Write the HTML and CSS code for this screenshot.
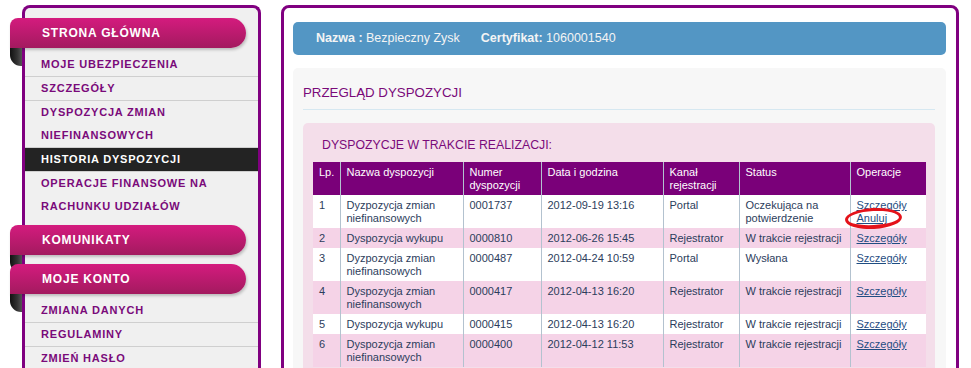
FILE: index.html
```html
<!DOCTYPE html>
<html lang="pl">
<head>
    <meta charset="UTF-8">
    <title>Przegląd dyspozycji</title>
    <link rel="stylesheet" href="styles.css">
</head>
<body>
<div id="container">
  <div class="side_col">
    <div class="sidebar">
      <div class="menu_section">
        <div class="menu_tab">STRONA GŁÓWNA</div>
        <ul class="menu_list">
          <li>MOJE UBEZPIECZENIA</li>
          <li>SZCZEGÓŁY</li>
          <li>DYSPOZYCJA ZMIAN NIEFINANSOWYCH</li>
          <li class="active">HISTORIA DYSPOZYCJI</li>
          <li class="last">OPERACJE FINANSOWE NA RACHUNKU UDZIAŁÓW</li>
        </ul>
      </div>
      <div class="menu_section collapsed">
        <div class="menu_tab">KOMUNIKATY</div>
      </div>
      <div class="menu_section">
        <div class="menu_tab">MOJE KONTO</div>
        <ul class="menu_list">
          <li>ZMIANA DANYCH</li>
          <li>REGULAMINY</li>
          <li>ZMIEŃ HASŁO</li>
        </ul>
      </div>
    </div>
  </div>

  <div class="main">
    <div class="info_bar">
      <span class="info_item"><b>Nazwa :</b> Bezpieczny Zysk</span>
      <span class="info_item"><b>Certyfikat:</b> 1060001540</span>
    </div>
    <div class="content_box">
      <div class="page_title">PRZEGLĄD DYSPOZYCJI</div>
      <div class="pink_box">
        <div class="box_title">DYSPOZYCJE W TRAKCIE REALIZACJI:</div>
        <table class="disp_table">
          <colgroup>
            <col style="width:27px">
            <col style="width:123px">
            <col style="width:78px">
            <col style="width:122px">
            <col style="width:76px">
            <col style="width:111px">
            <col style="width:76px">
          </colgroup>
          <thead>
            <tr>
              <th>Lp.</th>
              <th>Nazwa dyspozycji</th>
              <th>Numer dyspozycji</th>
              <th>Data i godzina</th>
              <th>Kanał rejestracji</th>
              <th>Status</th>
              <th>Operacje</th>
            </tr>
          </thead>
          <tbody>
            <tr>
              <td>1</td>
              <td>Dyzpozycja zmian niefinansowych</td>
              <td>0001737</td>
              <td>2012-09-19 13:16</td>
              <td>Portal</td>
              <td>Oczekująca na potwierdzenie</td>
              <td><a href="#">Szczegóły</a><br><span class="circled"><a href="#">Anuluj</a></span></td>
            </tr>
            <tr class="odd">
              <td>2</td>
              <td>Dyspozycja wykupu</td>
              <td>0000810</td>
              <td>2012-06-26 15:45</td>
              <td>Rejestrator</td>
              <td>W trakcie rejestracji</td>
              <td><a href="#">Szczegóły</a></td>
            </tr>
            <tr>
              <td>3</td>
              <td>Dyzpozycja zmian niefinansowych</td>
              <td>0000487</td>
              <td>2012-04-24 10:59</td>
              <td>Portal</td>
              <td>Wysłana</td>
              <td><a href="#">Szczegóły</a></td>
            </tr>
            <tr class="odd">
              <td>4</td>
              <td>Dyspozycja zmian niefinansowych</td>
              <td>0000417</td>
              <td>2012-04-13 16:20</td>
              <td>Rejestrator</td>
              <td>W trakcie rejestracji</td>
              <td><a href="#">Szczegóły</a></td>
            </tr>
            <tr>
              <td>5</td>
              <td>Dyspozycja wykupu</td>
              <td>0000415</td>
              <td>2012-04-13 16:20</td>
              <td>Rejestrator</td>
              <td>W trakcie rejestracji</td>
              <td><a href="#">Szczegóły</a></td>
            </tr>
            <tr class="odd">
              <td>6</td>
              <td>Dyspozycja zmian niefinansowych</td>
              <td>0000400</td>
              <td>2012-04-12 11:53</td>
              <td>Rejestrator</td>
              <td>W trakcie rejestracji</td>
              <td><a href="#">Szczegóły</a></td>
            </tr>
          </tbody>
        </table>
      </div>
    </div>
  </div>
</div>
</body>
</html>
```
FILE: styles.css
```css
html {
  margin: 0;
  overflow: hidden;
  background: #fff;
}
body {
  margin: 0;
  overflow: hidden;
  font-family: "Liberation Sans", Arial, sans-serif;
}
#container {
  display: flex;
  align-items: flex-start;
  padding: 5px 0 0 10px;
}
.side_col {
  width: 251px;
  flex: none;
}
.sidebar {
  margin-left: 12px;
  width: 233px;
  min-height: 420px;
  border: 3px solid #800080;
  border-bottom: none;
  border-radius: 8px 8px 0 0;
  background: #f0f0f0;
  padding-top: 10px;
}
.menu_section {
  margin-bottom: 5px;
}
.menu_section.collapsed {
  padding-bottom: 4px;
}
.menu_tab {
  position: relative;
  margin-left: -15px;
  width: 204px;
  height: 30px;
  line-height: 30px;
  padding-left: 32px;
  border-radius: 8px 15px 15px 0;
  background: linear-gradient(to bottom, #d41b7e, #a31a5f);
  box-shadow: 1px 2px 3px rgba(0, 0, 0, 0.22);
  color: #fff;
  font-size: 12px;
  font-weight: bold;
  letter-spacing: 0.8px;
}
.menu_tab::after {
  content: "";
  position: absolute;
  left: 0;
  top: 30px;
  width: 12px;
  height: 18px;
  border-radius: 0 0 0 11px;
  background: linear-gradient(to right, #111, #333 60%, #555);
}
.menu_list {
  list-style: none;
  margin: 0;
  padding: 5px 0 2px;
}
.menu_list li {
  padding: 0 10px 0 16px;
  line-height: 23px;
  border-bottom: 1px solid #cfcfcf;
  color: #7a0a7a;
  font-size: 11px;
  font-weight: bold;
  letter-spacing: 0.8px;
}
.menu_list li.active {
  background: #232323;
  color: #fff;
}
.menu_list li.last {
  border-bottom: none;
}
.main {
  margin-left: 20px;
  width: 653px;
  min-height: 420px;
  border: 3px solid #800080;
  border-radius: 8px;
  padding: 14px 10px 0 9px;
}
.info_bar {
  display: flex;
  gap: 21px;
  height: 33px;
  line-height: 33px;
  padding-left: 23px;
  border-radius: 5px;
  background: #5396c4;
  color: #f4f4f4;
  font-size: 12.5px;
}
.content_box {
  margin-top: 13px;
  padding: 0 11px 0 10px;
  border-radius: 5px;
  background: #f7f7f7;
  min-height: 340px;
}
.page_title {
  padding: 17px 0 8px;
  line-height: 16px;
  border-bottom: 1px solid #d6e8f1;
  color: #7a0a7a;
  font-size: 13.3px;
}
.pink_box {
  margin-top: 13px;
  padding: 14px 9px 0 10px;
  border-radius: 5px;
  background: #f4deea;
  min-height: 300px;
}
.box_title {
  padding-left: 9px;
  line-height: 16px;
  margin-bottom: 9px;
  color: #7a0a7a;
  font-size: 12.3px;
}
.disp_table {
  width: 613px;
  table-layout: fixed;
  border-collapse: collapse;
  font-size: 11px;
  line-height: 13px;
}
.disp_table th {
  padding: 4px 6px 3px;
  background: #7a0079;
  color: #fff;
  font-weight: normal;
  text-align: left;
  vertical-align: top;
}
.disp_table td {
  padding: 4px 6px 3px;
  background: #fff;
  color: #2c3d5c;
  vertical-align: top;
}
.disp_table th + th,
.disp_table td + td {
  border-left: 1px solid #b3c2cf;
}
.disp_table tr.odd td {
  background: #f5d3e7;
}
.disp_table a {
  color: #1f4d82;
}
.circled {
  position: relative;
}
.circled::after {
  content: "";
  position: absolute;
  left: -12px;
  top: -4px;
  width: 57px;
  height: 21px;
  box-sizing: border-box;
  border: 3px solid #e4121a;
  border-bottom-width: 4px;
  border-radius: 50%;
  transform: rotate(-3deg);
}
```
